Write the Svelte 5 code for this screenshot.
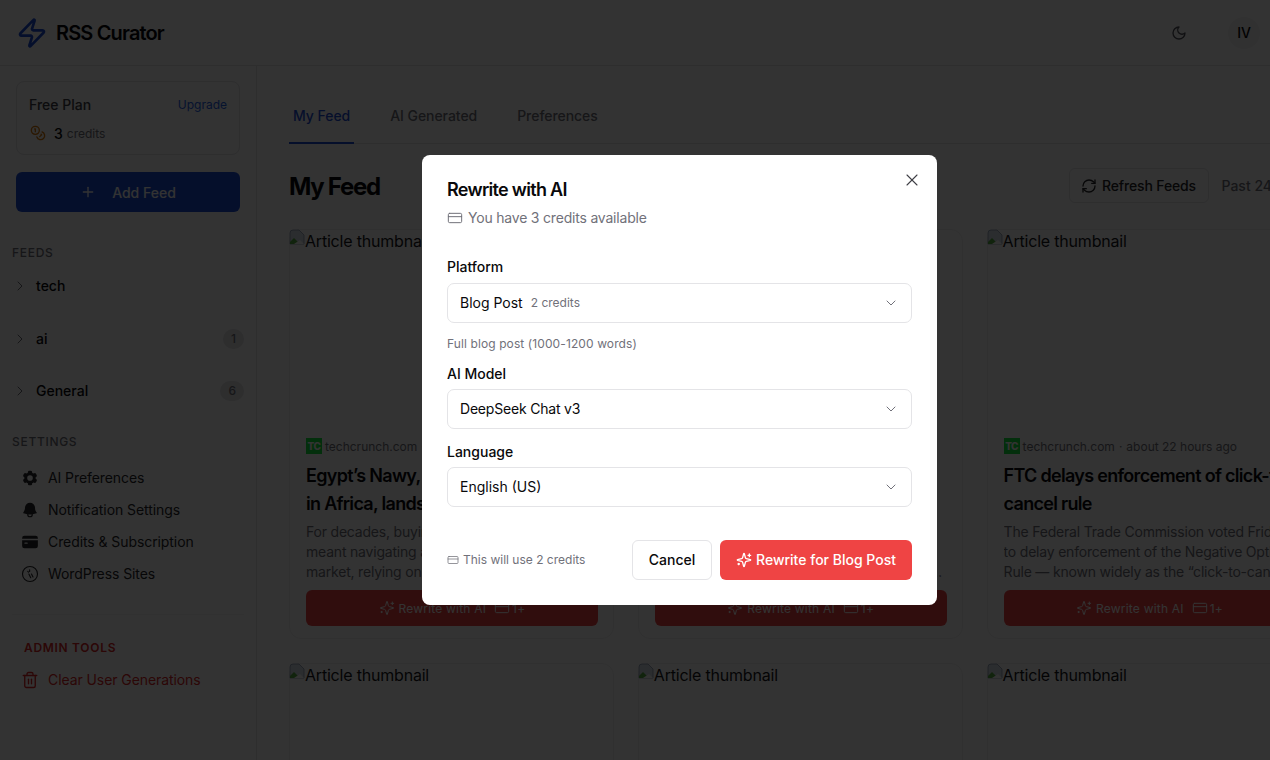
<script>
  const zap = ['M4 14a1 1 0 0 1-.78-1.63l9.9-10.2a.5.5 0 0 1 .86.46l-1.92 6.02A1 1 0 0 0 13 10h7a1 1 0 0 1 .78 1.63l-9.9 10.2a.5.5 0 0 1-.86-.46l1.92-6.02A1 1 0 0 0 11 14z'];
  const moon = ['M12 3a6 6 0 0 0 9 9 9 9 0 1 1-9-9Z'];
  const coins = ['M8 2a6 6 0 1 0 0 12A6 6 0 0 0 8 2Z', 'M18.09 10.37A6 6 0 1 1 10.34 18', 'M7 6h1v4', 'm16.71 13.88.7.71-2.82 2.82'];
  const plus = ['M5 12h14', 'M12 5v14'];
  const chevronRight = ['m9 18 6-6-6-6'];
  const chevronDown = ['m6 9 6 6 6-6'];
  const card = ['M4 5h16a2 2 0 0 1 2 2v10a2 2 0 0 1-2 2H4a2 2 0 0 1-2-2V7a2 2 0 0 1 2-2Z', 'M2 10h20'];
  const sparkles = [
    'M9.937 15.5A2 2 0 0 0 8.5 14.063l-6.135-1.582a.5.5 0 0 1 0-.962L8.5 9.936A2 2 0 0 0 9.937 8.5l1.582-6.135a.5.5 0 0 1 .963 0L14.063 8.5A2 2 0 0 0 15.5 9.937l6.135 1.581a.5.5 0 0 1 0 .964L15.5 14.063a2 2 0 0 0-1.437 1.437l-1.582 6.135a.5.5 0 0 1-.963 0z',
    'M20 3v4', 'M22 5h-4', 'M4 17v2', 'M5 18H3'
  ];
  const refresh = ['M3 12a9 9 0 0 1 9-9 9.75 9.75 0 0 1 6.74 2.74L21 8', 'M21 3v5h-5', 'M21 12a9 9 0 0 1-9 9 9.75 9.75 0 0 1-6.74-2.74L3 16', 'M8 16H3v5'];
  const close = ['M18 6 6 18', 'm6 6 12 12'];
  const trash = ['M3 6h18', 'M19 6v14c0 1-1 2-2 2H7c-1 0-2-1-2-2V6', 'M8 6V4c0-1 1-2 2-2h4c1 0 2 1 2 2v2', 'M10 11v6', 'M14 11v6'];
  const wordpress = ['M12 2a10 10 0 1 0 0 20 10 10 0 0 0 0-20Z', 'M9 8.5l1 1', 'M11.5 6.5v2', 'M10.5 12l2.5 5', 'M14 12l2 4'];

  const gearSolid = 'M11.078 2.25c-.917 0-1.699.663-1.85 1.567L9.05 4.889c-.02.12-.115.26-.297.348a7.493 7.493 0 0 0-.986.57c-.166.115-.334.126-.45.083L6.3 5.508a1.875 1.875 0 0 0-2.282.819l-.922 1.597a1.875 1.875 0 0 0 .432 2.385l.84.692c.095.078.17.229.154.43a7.598 7.598 0 0 0 0 1.139c.015.2-.059.352-.153.43l-.841.692a1.875 1.875 0 0 0-.432 2.385l.922 1.597a1.875 1.875 0 0 0 2.282.818l1.019-.382c.115-.043.283-.031.45.082.312.214.641.405.985.57.182.088.277.228.297.35l.178 1.071c.151.904.933 1.567 1.85 1.567h1.844c.916 0 1.699-.663 1.85-1.567l.178-1.072c.02-.12.114-.26.297-.349.344-.165.673-.356.985-.57.167-.114.335-.125.45-.082l1.02.382a1.875 1.875 0 0 0 2.28-.819l.923-1.597a1.875 1.875 0 0 0-.432-2.385l-.84-.692c-.095-.078-.17-.229-.154-.43a7.614 7.614 0 0 0 0-1.139c-.016-.2.059-.352.153-.43l.84-.692c.708-.582.891-1.59.433-2.385l-.922-1.597a1.875 1.875 0 0 0-2.282-.818l-1.02.382c-.114.043-.282.031-.449-.083a7.49 7.49 0 0 0-.985-.57c-.183-.087-.277-.227-.297-.348l-.179-1.072a1.875 1.875 0 0 0-1.85-1.567h-1.843ZM12 15.75a3.75 3.75 0 1 0 0-7.5 3.75 3.75 0 0 0 0 7.5Z';
  const bellSolid = 'M5.25 9a6.75 6.75 0 0 1 13.5 0v.75c0 2.123.8 4.057 2.118 5.52a.75.75 0 0 1-.297 1.206c-1.544.57-3.16.99-4.831 1.243a3.75 3.75 0 1 1-7.48 0 24.585 24.585 0 0 1-4.831-1.244.75.75 0 0 1-.298-1.205A8.217 8.217 0 0 0 5.25 9.75V9Zm4.502 8.9a2.25 2.25 0 1 0 4.496 0 25.057 25.057 0 0 1-4.496 0Z';
  const cardSolid = 'M4.5 3.75a3 3 0 0 0-3 3v.75h21v-.75a3 3 0 0 0-3-3h-15ZM22.5 9.75h-21v7.5a3 3 0 0 0 3 3h15a3 3 0 0 0 3-3v-7.5Zm-18 3.75a.75.75 0 0 1 .75-.75h3a.75.75 0 0 1 0 1.5h-3a.75.75 0 0 1-.75-.75Z';

  const feeds = [
    { name: 'tech', count: 0 },
    { name: 'ai', count: 1 },
    { name: 'General', count: 6 }
  ];

  const articles = [
    {
      title: 'Egypt’s Nawy, a top proptech player in Africa, lands $52M in funding',
      text: 'For decades, buying a home in Egypt has meant navigating a fragmented property market, relying on brokers and word of mouth to find a home worth buying.'
    },
    {
      title: 'Early-stage founders keep raising bigger rounds this year',
      text: 'Investors say that seed rounds have grown considerably this year, and founders now encounter much stricter demands for traction before a term sheet is signed at all, even for the small rounds.'
    },
    {
      title: 'FTC delays enforcement of click-to-cancel rule',
      text: 'The Federal Trade Commission voted Friday to delay enforcement of the Negative Option Rule — known widely as the “click-to-cancel” rule, which would make it easier to end subscriptions.'
    }
  ];
</script>

{#snippet icon(paths, size = 16, width = 2)}
  <svg class="icon" viewBox="0 0 24 24" width={size} height={size} fill="none" stroke="currentColor" stroke-width={width} stroke-linecap="round" stroke-linejoin="round">
    {#each paths as d}<path {d} />{/each}
  </svg>
{/snippet}

{#snippet solid(d)}
  <svg class="icon" viewBox="0 0 24 24" width="18" height="18" fill="currentColor"><path fill-rule="evenodd" {d} /></svg>
{/snippet}

{#snippet thumb()}
  <div class="thumb">
    <svg class="broken" viewBox="0 0 16 16" width="16" height="16">
      <path d="M1 15V4a3 3 0 0 1 3-3h6l5 5v9z" fill="#d5dee9" stroke="#8d9bb0" stroke-width=".8" />
      <path d="M1 15v-2l4-4 4 4-2 2z" fill="#55b040" />
      <path d="M5 15l6-4 4 4z" fill="#ffffff" />
    </svg>Article thumbnail
  </div>
{/snippet}

<div class="page">
  <header class="topbar">
    <div class="brand">
      <span class="logo">{@render icon(zap, 32, 2)}</span>
      <span class="brand-name">RSS Curator</span>
    </div>
    <div class="top-actions">
      <span class="moon">{@render icon(moon, 16, 2)}</span>
      <span class="avatar">IV</span>
    </div>
  </header>

  <div class="body">
    <aside class="sidebar">
      <div class="plan">
        <div class="plan-row">
          <span class="plan-name">Free Plan</span>
          <span class="upgrade">Upgrade</span>
        </div>
        <div class="plan-credits">
          <span class="coins">{@render icon(coins, 16, 2)}</span>
          <strong>3</strong>
          <span class="credits-word">credits</span>
        </div>
      </div>

      <button class="add-feed">{@render icon(plus, 16, 2)}<span>Add Feed</span></button>

      <div class="section-label feeds-label">FEEDS</div>
      <div class="feed-list">
        {#each feeds as feed}
          <div class="feed">
            <span class="feed-chevron">{@render icon(chevronRight, 16, 1.5)}</span>
            <span class="feed-name">{feed.name}</span>
            {#if feed.count}<span class="badge">{feed.count}</span>{/if}
          </div>
        {/each}
      </div>

      <div class="section-label settings-label">SETTINGS</div>
      <nav class="settings">
        <div class="nav-item">{@render solid(gearSolid)}AI Preferences</div>
        <div class="nav-item">{@render solid(bellSolid)}Notification Settings</div>
        <div class="nav-item">{@render solid(cardSolid)}Credits &amp; Subscription</div>
        <div class="nav-item"><span class="wp">{@render icon(wordpress, 18, 1.5)}</span>WordPress Sites</div>
      </nav>

      <div class="admin">
        <div class="section-label admin-label">ADMIN TOOLS</div>
        <div class="nav-item danger">{@render icon(trash, 18, 1.8)}Clear User Generations</div>
      </div>
    </aside>

    <main class="main">
      <div class="tabs">
        <span class="tab active">My Feed</span>
        <span class="tab">AI Generated</span>
        <span class="tab">Preferences</span>
      </div>

      <div class="feed-head">
        <h1>My Feed</h1>
        <div class="feed-tools">
          <button class="refresh">{@render icon(refresh, 16, 2)}Refresh Feeds</button>
          <span class="past">Past 24 hours</span>
        </div>
      </div>

      <div class="grid">
        {#each articles as article}
          <article class="card">
            {@render thumb()}
            <div class="card-body">
              <div class="meta">
                <span class="favicon">TC</span>
                <span>techcrunch.com</span>
                <span class="dot">·</span>
                <span>about 22 hours ago</span>
              </div>
              <h2>{article.title}</h2>
              <p>{article.text}</p>
              <button class="rewrite">
                {@render icon(sparkles, 16, 1.5)}
                <span>Rewrite with AI</span>
                <span class="cost">{@render icon(card, 16, 1.5)}1+</span>
              </button>
            </div>
          </article>
        {/each}
        {#each articles as _}
          <article class="card">{@render thumb()}</article>
        {/each}
      </div>
    </main>
  </div>

  <div class="overlay">
    <div class="modal">
      <button class="close" aria-label="Close">{@render icon(close, 20, 1.3)}</button>
      <h3>Rewrite with AI</h3>
      <div class="available">{@render icon(card, 16, 1.5)}You have 3 credits available</div>

      <div class="field first">
        <span class="label">Platform</span>
        <div class="select">
          <span class="value">Blog Post<small>2 credits</small></span>
          <span class="caret">{@render icon(chevronDown, 16, 1.5)}</span>
        </div>
        <div class="hint">Full blog post (1000-1200 words)</div>
      </div>

      <div class="field model">
        <span class="label">AI Model</span>
        <div class="select">
          <span class="tight">DeepSeek Chat v3</span>
          <span class="caret">{@render icon(chevronDown, 16, 1.5)}</span>
        </div>
      </div>

      <div class="field language">
        <span class="label">Language</span>
        <div class="select">
          <span>English (US)</span>
          <span class="caret">{@render icon(chevronDown, 16, 1.5)}</span>
        </div>
      </div>

      <div class="modal-foot">
        <span class="uses">{@render icon(card, 12, 1.5)}This will use 2 credits</span>
        <div class="foot-buttons">
          <button class="cancel">Cancel</button>
          <button class="go">{@render icon(sparkles, 16, 2)}Rewrite for Blog Post</button>
        </div>
      </div>
    </div>
  </div>
</div>

<style>
  :global(body) {
    margin: 0;
    background: #fff;
  }

  .page {
    width: 1270px;
    height: 760px;
    overflow: hidden;
    display: flex;
    flex-direction: column;
    font-family: Inter, "Liberation Sans", sans-serif;
    color: #09090b;
    font-size: 14px;
  }

  .icon {
    display: block;
    flex-shrink: 0;
  }

  button {
    font-family: inherit;
    cursor: pointer;
  }

  .topbar {
    height: 65px;
    flex-shrink: 0;
    border-bottom: 1px solid #e4e4e7;
    display: flex;
    align-items: center;
    justify-content: space-between;
    padding: 0 10px 0 16px;
  }

  .brand {
    display: flex;
    align-items: center;
    gap: 8px;
  }

  .logo {
    color: #1d4ed8;
  }

  .brand-name {
    font-size: 20px;
    font-weight: 600;
    letter-spacing: -0.85px;
  }

  .top-actions {
    display: flex;
    align-items: center;
    gap: 41px;
  }

  .moon {
    color: #52525b;
  }

  .avatar {
    width: 32px;
    height: 32px;
    border-radius: 50%;
    background: #f4f4f5;
    display: flex;
    align-items: center;
    justify-content: center;
    font-weight: 500;
  }

  .body {
    flex: 1;
    display: flex;
    min-height: 0;
  }

  .sidebar {
    width: 257px;
    flex-shrink: 0;
    box-sizing: border-box;
    border-right: 1px solid #e4e4e7;
    padding: 15px 12px 0 16px;
  }

  .plan {
    width: 224px;
    height: 74px;
    box-sizing: border-box;
    border: 1px solid #e4e4e7;
    border-radius: 8px;
    padding: 12px;
    background: #fcfcfc;
  }

  .plan-row {
    display: flex;
    justify-content: space-between;
    align-items: center;
    height: 20px;
  }

  .plan-name {
    font-weight: 500;
    color: #3f3f46;
  }

  .upgrade {
    font-size: 12px;
    color: #2563eb;
  }

  .plan-credits {
    display: flex;
    align-items: center;
    margin-top: 9px;
    height: 20px;
  }

  .coins {
    color: #d97706;
    margin: 0 8px 0 1px;
  }

  .plan-credits strong {
    font-weight: 500;
    margin-right: 4px;
  }

  .credits-word {
    font-size: 12px;
    color: #71717a;
  }

  .add-feed {
    margin-top: 17px;
    width: 224px;
    height: 40px;
    border: 0;
    border-radius: 6px;
    background: #1d4ed8;
    color: #fff;
    font-size: 14px;
    font-weight: 500;
    display: flex;
    align-items: center;
    justify-content: center;
    gap: 16px;
  }

  .section-label {
    font-size: 12px;
    font-weight: 500;
    letter-spacing: 0.7px;
    color: #71717a;
    line-height: 16px;
  }

  .feeds-label {
    margin: 33px 0 0 -4px;
  }

  .feed-list {
    margin-left: -4px;
    margin-top: 5px;
  }

  .feed {
    height: 52.5px;
    display: flex;
    align-items: flex-start;
    font-weight: 500;
    line-height: 40px;
  }

  .feed-chevron {
    width: 24px;
    height: 40px;
    display: flex;
    align-items: center;
    color: #71717a;
  }

  .feed-name {
    flex: 1;
  }

  .badge {
    margin-top: 10px;
    min-width: 5px;
    height: 20px;
    line-height: 20px;
    padding: 0 8px;
    border-radius: 10px;
    background: #e4e4e7;
    color: #71717a;
    font-size: 12px;
    font-weight: 500;
    text-align: center;
  }

  .settings-label {
    margin: 10px 0 0 -4px;
  }

  .settings {
    margin-top: 12px;
  }

  .nav-item {
    height: 32px;
    display: flex;
    align-items: center;
    gap: 9px;
    padding-left: 5px;
    color: #27272a;
    letter-spacing: -0.08px;
  }

  .wp {
    color: #27272a;
  }

  .admin {
    margin: 24px 0 0 -4px;
    padding-top: 25px;
    border-top: 1px solid #f4f4f5;
  }

  .admin-label {
    color: #dc2626;
    padding-left: 12px;
    font-weight: 600;
    margin-bottom: 8px;
    letter-spacing: 0.7px;
  }

  .nav-item.danger {
    color: #dc2626;
    padding-left: 9px;
  }

  .main {
    flex: 1;
    min-width: 0;
    overflow: hidden;
    padding: 32px 0 0 32px;
  }

  .tabs {
    width: 1100px;
    height: 46px;
    box-sizing: border-box;
    border-bottom: 1px solid #e4e4e7;
    display: flex;
    gap: 32px;
  }

  .tab {
    padding: 0 4px;
    height: 46px;
    box-sizing: border-box;
    line-height: 36px;
    font-weight: 500;
    color: #71717a;
    letter-spacing: -0.05px;
  }

  .tab.active {
    color: #1d4ed8;
    border-bottom: 2px solid #1d4ed8;
  }

  .feed-head {
    display: flex;
    align-items: flex-start;
    justify-content: space-between;
    width: 1025px;
    margin-top: 24px;
    height: 35px;
  }

  h1 {
    margin: 0;
    padding: 3px 0 0;
    font-size: 24px;
    line-height: 32px;
    font-weight: 700;
    letter-spacing: -1.3px;
  }

  .feed-tools {
    display: flex;
    align-items: center;
    gap: 13px;
    white-space: nowrap;
  }

  .refresh {
    width: 140px;
    height: 35px;
    border: 1px solid #e4e4e7;
    border-radius: 6px;
    background: #fff;
    color: #27272a;
    font-size: 14px;
    font-weight: 500;
    letter-spacing: -0.15px;
    display: flex;
    align-items: center;
    justify-content: center;
    gap: 5px;
    padding: 0;
  }

  .past {
    font-weight: 500;
    color: #71717a;
  }

  .grid {
    display: grid;
    grid-template-columns: repeat(3, 324.8px);
    gap: 24px;
    margin-top: 26px;
    width: 1023px;
  }

  .card {
    height: 410px;
    box-sizing: border-box;
    border: 1px solid #f0f0f1;
    border-radius: 12px;
    display: flex;
    flex-direction: column;
  }

  .thumb {
    height: 200px;
    flex-shrink: 0;
    margin: -1px 0 0 -1px;
    font-size: 16px;
    line-height: 24px;
    letter-spacing: -0.2px;
    color: #18181b;
    display: flex;
    align-items: flex-start;
  }

  .card-body {
    padding: 9px 15px 12px 16px;
    display: flex;
    flex-direction: column;
    min-width: 0;
  }

  .meta {
    display: flex;
    align-items: center;
    height: 16px;
    font-size: 12px;
    color: #71717a;
    white-space: nowrap;
  }

  .dot {
    margin: 0 4px;
  }

  .favicon {
    width: 16px;
    height: 16px;
    margin-right: 3px;
    background: #12e83c;
    color: #fff;
    font-size: 10px;
    font-weight: 800;
    line-height: 16px;
    text-align: center;
    letter-spacing: -0.5px;
  }

  h2 {
    margin: 8px 0 0;
    font-size: 18px;
    font-weight: 600;
    line-height: 28px;
    letter-spacing: -0.7px;
    height: 56px;
    overflow: hidden;
  }

  p {
    margin: 4px 0 0;
    font-size: 14px;
    line-height: 20px;
    letter-spacing: -0.2px;
    color: #71717a;
    display: -webkit-box;
    -webkit-line-clamp: 3;
    -webkit-box-orient: vertical;
    overflow: hidden;
  }

  /* the third card runs off the page, so no ellipsis there */
  .card:nth-child(3) p {
    display: block;
    height: 60px;
    margin-right: -6px;
  }

  .rewrite {
    margin-top: 8px;
    height: 36px;
    border: 0;
    border-radius: 6px;
    background: #ef4444;
    color: #fff;
    font-size: 12px;
    font-weight: 400;
    letter-spacing: 0.2px;
    display: flex;
    align-items: center;
    justify-content: center;
    gap: 4px;
  }

  .cost {
    display: flex;
    align-items: center;
    gap: 2px;
    margin-left: 4px;
    font-size: 12px;
  }

  .overlay {
    position: fixed;
    inset: 0;
    background: rgba(0, 0, 0, 0.8);
    display: flex;
    align-items: center;
    justify-content: center;
    padding-left: 89px;
  }

  .modal {
    position: relative;
    width: 515px;
    height: 450px;
    box-sizing: border-box;
    background: #fff;
    border-radius: 8px;
    padding: 25px 25px 24px;
  }

  .close {
    position: absolute;
    top: 15px;
    right: 15px;
    border: 0;
    background: none;
    padding: 0;
    color: #3f3f46;
  }

  h3 {
    margin: 0;
    font-size: 18px;
    font-weight: 600;
    line-height: 20px;
    letter-spacing: -0.7px;
  }

  .available {
    display: flex;
    align-items: center;
    gap: 5px;
    margin-top: 8px;
    line-height: 20px;
    letter-spacing: -0.2px;
    color: #71717a;
  }

  .field.first {
    margin-top: 29px;
  }

  .field.model {
    margin-top: 12px;
  }

  .field.language {
    margin-top: 13px;
  }

  .label {
    display: block;
    font-weight: 500;
    line-height: 20px;
    margin-bottom: 5px;
  }

  .field.first .label {
    margin-bottom: 6px;
  }

  .select {
    height: 40px;
    box-sizing: border-box;
    border: 1px solid #e4e4e7;
    border-radius: 7px;
    padding: 0 12px 1px;
    display: flex;
    align-items: center;
    justify-content: space-between;
  }

  .value {
    display: flex;
    align-items: center;
    gap: 8px;
  }

  .tight {
    letter-spacing: -0.2px;
  }

  .select small {
    font-size: 12px;
    color: #71717a;
  }

  .caret {
    color: #71717a;
  }

  .hint {
    margin-top: 13px;
    font-size: 12px;
    line-height: 16px;
    letter-spacing: 0.1px;
    color: #71717a;
  }

  .modal-foot {
    margin-top: 33px;
    display: flex;
    align-items: center;
    justify-content: space-between;
  }

  .uses {
    display: flex;
    align-items: center;
    gap: 4px;
    padding-bottom: 1px;
    font-size: 12px;
    color: #71717a;
  }

  .foot-buttons {
    display: flex;
    gap: 8px;
  }

  .cancel {
    width: 80px;
    height: 40px;
    border: 1px solid #e4e4e7;
    border-radius: 6px;
    background: #fff;
    color: #09090b;
    font-size: 14px;
    font-weight: 500;
    padding: 0 0 1px;
  }

  .go {
    width: 192px;
    height: 40px;
    border: 0;
    border-radius: 6px;
    background: #ef4444;
    color: #fff;
    font-size: 14px;
    font-weight: 500;
    display: flex;
    align-items: center;
    justify-content: center;
    gap: 4px;
    padding: 0 0 1px;
  }
</style>
